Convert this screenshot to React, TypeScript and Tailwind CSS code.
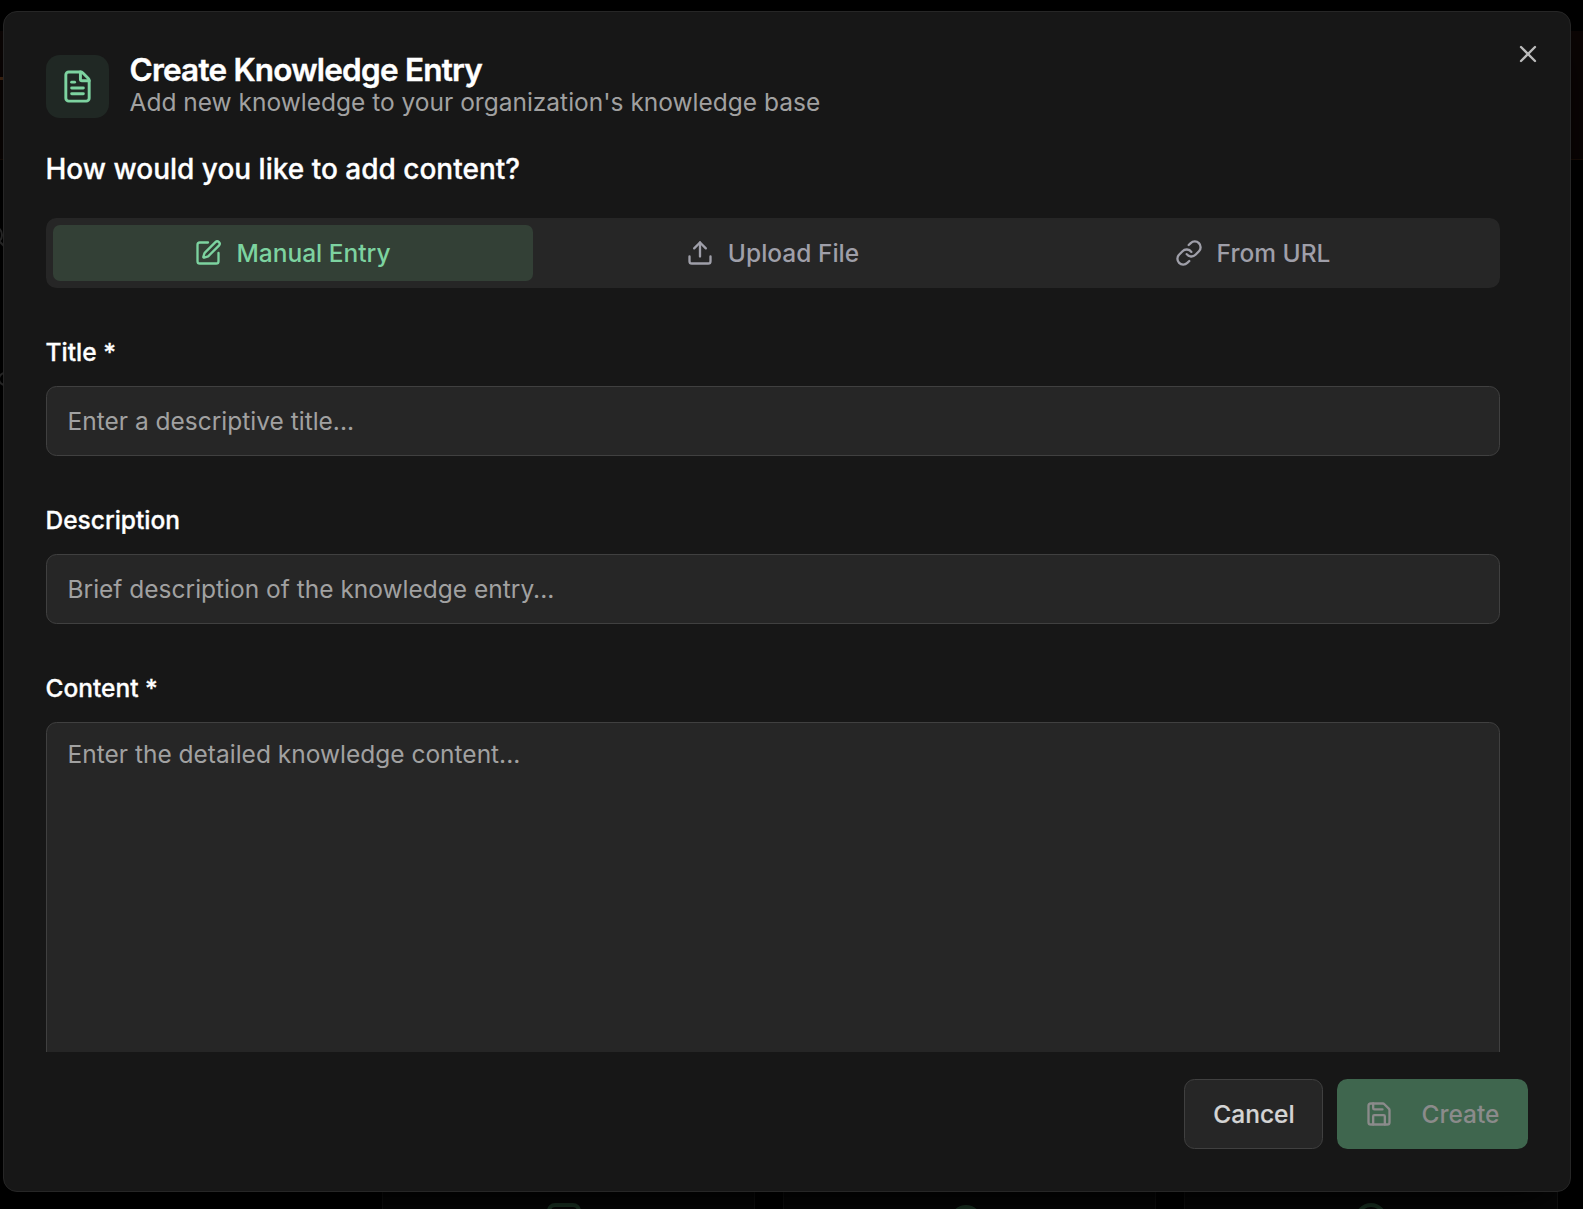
import { useState } from "react";
import type { ReactNode } from "react";
import { FileText, Link, Save, SquarePen, Upload, X } from "lucide-react";
import type { LucideIcon } from "lucide-react";

type EntryMode = "manual" | "upload" | "url";

const modes: { id: EntryMode; label: string; icon: LucideIcon }[] = [
  { id: "manual", label: "Manual Entry", icon: SquarePen },
  { id: "upload", label: "Upload File", icon: Upload },
  { id: "url", label: "From URL", icon: Link },
];

function Field({ label, htmlFor, children }: { label: string; htmlFor: string; children: ReactNode }) {
  return (
    <div className="flex flex-col gap-4">
      <label
        htmlFor={htmlFor}
        className="-ml-[0.5px] h-[35px] text-[24.5px] leading-[35px] font-medium text-white [-webkit-text-stroke:0.3px]"
      >
        {label}
      </label>
      {children}
    </div>
  );
}

/* Dimmed page that shows around the dialog */
function Backdrop() {
  return (
    <div className="absolute inset-0 flex flex-col justify-between">
      <div className="mt-[31px] h-[129px] border-b border-[#1a0e07] bg-[#0b0504] pt-[46px]">
        <div className="h-[3px] w-1 bg-[#4a2a14]" />
      </div>
      {/* Search icon and select edge, mostly covered */}
      <svg className="absolute top-[220px] left-0" width="6" height="190" fill="none" stroke="#333333" strokeWidth="2">
        <circle cx="-7" cy="15" r="9" />
        <path d="M-1 21l6 6" />
        <circle cx="5" cy="159" r="6" />
      </svg>
      <div className="flex h-5 justify-end gap-7 pr-[25px]">
        <div className="flex w-[373px] justify-center border-x border-[#161616] bg-[#080808] pt-3.5 pr-[9px]">
          <div className="h-8 w-[34px] rounded-lg border-4 border-[#24442f]" />
        </div>
        <div className="flex w-[373px] justify-center border-x border-[#161616] bg-[#080808] pt-4 pr-[7px]">
          <div className="h-8 w-8 rounded-full border-4 border-[#24442f]" />
        </div>
        <div className="flex w-[374px] justify-center border-x border-[#161616] bg-[#080808] pt-3.5">
          <div className="h-8 w-8 rounded-full border-4 border-[#24442f]" />
        </div>
      </div>
    </div>
  );
}

export default function App() {
  const [mode, setMode] = useState<EntryMode>("manual");

  return (
    <div className="relative h-[1209px] w-[1583px] overflow-hidden bg-black pt-[11px] pl-[3px] font-['Inter',sans-serif]">
      <Backdrop />

      <div className="relative flex h-[1181px] w-[1568px] flex-col rounded-[14px] border border-[#262626] bg-[#171717] p-[42px] shadow-2xl shadow-black">
        <button aria-label="Close" className="absolute top-7 right-7 text-[#bcbcbc]">
          <X size={28} />
        </button>

        {/* Header */}
        <div className="flex h-[66px] items-start gap-[20.5px]">
          <div className="mt-px flex h-[63px] w-[63px] items-center justify-center rounded-[14px] bg-[#202824] text-[#7dd3a0]">
            <FileText size={35} />
          </div>
          <div>
            <h2 className="text-[31.5px] leading-[31px] font-semibold tracking-tight text-white [-webkit-text-stroke:0.4px]">
              Create Knowledge Entry
            </h2>
            <p className="text-[24.5px] leading-[35px] text-[#a1a1a1]">
              Add new knowledge to your organization's knowledge base
            </p>
          </div>
        </div>

        {/* Scroll area */}
        <div className="-ml-px mt-7 h-[904px] w-[1455px] shrink-0 overflow-hidden pl-px">
          <h3 className="-ml-[0.5px] text-[28px] leading-[42px] font-medium text-white [-webkit-text-stroke:0.3px]">
            How would you like to add content?
          </h3>

          <div className="mt-7 grid h-[70px] grid-cols-3 rounded-[10.5px] bg-[#262626] p-[7px]">
            {modes.map(({ id, label, icon: Icon }) => (
              <button
                key={id}
                onClick={() => setMode(id)}
                className={`flex items-center justify-center gap-3.5 rounded-[7px] pr-px text-[24.5px] leading-[35px] font-medium ${
                  mode === id ? "bg-[#334036] text-[#7dd3a0]" : "text-[#9f9fa9]"
                }`}
              >
                <Icon size={28} />
                {label}
              </button>
            ))}
          </div>

          <div className="mt-[47px] flex flex-col gap-[47px]">
            <Field label="Title *" htmlFor="title">
              <input
                id="title"
                placeholder="Enter a descriptive title..."
                className="h-[70px] w-full rounded-[10.5px] border border-[#404040] bg-[#262626] px-[20.5px] text-[24.5px] text-white placeholder:text-[#a1a1a1]"
              />
            </Field>
            <Field label="Description" htmlFor="description">
              <input
                id="description"
                placeholder="Brief description of the knowledge entry..."
                className="h-[70px] w-full rounded-[10.5px] border border-[#404040] bg-[#262626] px-[20.5px] text-[24.5px] text-white placeholder:text-[#a1a1a1]"
              />
            </Field>
            <Field label="Content *" htmlFor="content">
              <textarea
                id="content"
                placeholder="Enter the detailed knowledge content..."
                className="h-[420px] w-full resize-none rounded-[10.5px] border border-[#404040] bg-[#262626] px-[20.5px] py-3.5 text-[24.5px] leading-[35px] text-white placeholder:text-[#a1a1a1]"
              />
            </Field>
          </div>
        </div>

        {/* Footer */}
        <div className="mt-[27px] flex justify-end gap-3.5">
          <button className="h-[70px] w-[139px] rounded-[10.5px] border border-[#404040] bg-[#262626] pl-px text-[24.5px] leading-[35px] font-medium text-[#d4d4d4] [-webkit-text-stroke:0.2px]">
            Cancel
          </button>
          <button
            disabled
            className="flex h-[70px] w-[191px] items-center gap-[28.5px] rounded-[10.5px] bg-[#3f664e] pl-7 text-[24.5px] leading-[35px] font-medium text-[#8b8b8b]"
          >
            <Save size={28} className="shrink-0" />
            Create
          </button>
        </div>
      </div>
    </div>
  );
}
